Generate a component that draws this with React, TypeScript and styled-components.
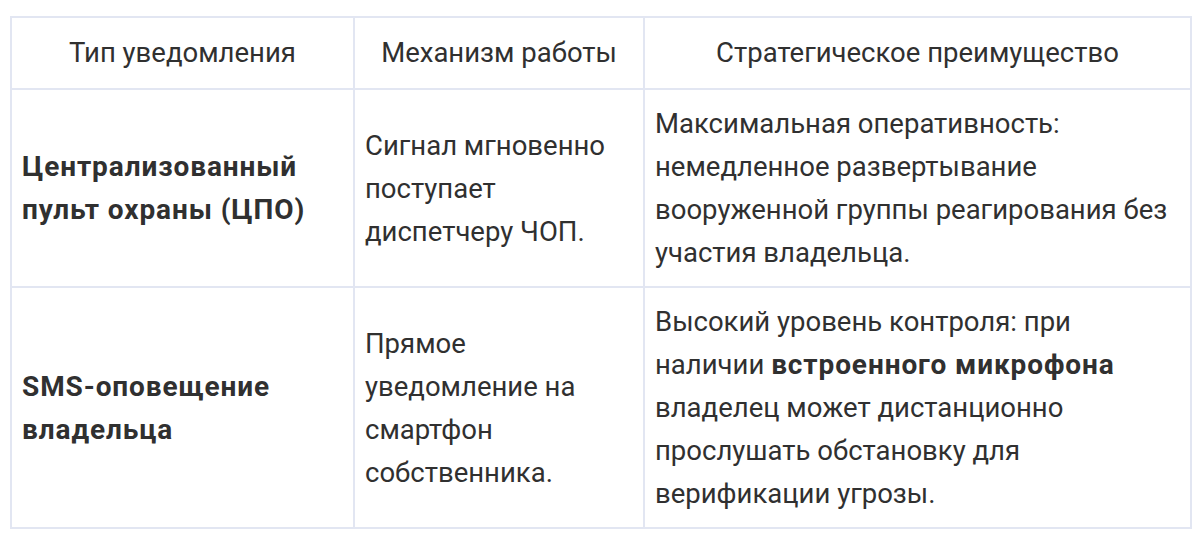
import React from "react";
import styled, { createGlobalStyle } from "styled-components";

const GlobalStyle = createGlobalStyle`
  html, body {
    margin: 0;
    padding: 0;
    background: #ffffff;
  }
  body {
    font-family: Roboto, "Noto Sans", "Liberation Sans", sans-serif;
    color: #303030;
  }
`;

const Page = styled.div`
  padding: 16px 10px;
`;

const Table = styled.table`
  width: 1180px;
  table-layout: fixed;
  border-collapse: collapse;
  font-size: 27.5px;
  line-height: 43px;
  border: 2px solid #e2e6f2;
`;

const HeadCell = styled.th`
  font-weight: 400;
  text-align: center;
  vertical-align: middle;
  padding: 13px 10px 14px;
  border: 2px solid #e2e6f2;
  color: #303030;
`;

const strongText = `
  font-weight: 700;
  font-size: 28px;
  letter-spacing: 0.9px;
`;

const Cell = styled.td<{ $strong?: boolean }>`
  text-align: left;
  vertical-align: middle;
  padding: 12px 10px;
  border: 2px solid #e2e6f2;
  color: #303030;
  font-weight: 400;
  ${({ $strong }) => ($strong ? strongText : "")}

  b {
    ${strongText}
  }
`;

interface Row {
  type: string;
  mechanism: string;
  advantage: React.ReactNode;
}

const rows: Row[] = [
  {
    type: "Централизованный пульт охраны (ЦПО)",
    mechanism: "Сигнал мгновенно поступает диспетчеру ЧОП.",
    advantage:
      "Максимальная оперативность: немедленное развертывание вооруженной группы реагирования без участия владельца.",
  },
  {
    type: "SMS-оповещение владельца",
    mechanism: "Прямое уведомление на смартфон собственника.",
    advantage: (
      <>
        Высокий уровень контроля: при
        <br />
        наличии <b>встроенного микрофона</b>
        <br />
        владелец может дистанционно
        <br />
        прослушать обстановку для
        <br />
        верификации угрозы.
      </>
    ),
  },
];

export default function App() {
  return (
    <>
      <GlobalStyle />
      <Page>
        <Table>
          <colgroup>
            <col style={{ width: 343 }} />
            <col style={{ width: 290 }} />
            <col style={{ width: 547 }} />
          </colgroup>
          <thead>
            <tr>
              <HeadCell>Тип уведомления</HeadCell>
              <HeadCell>Механизм работы</HeadCell>
              <HeadCell>Стратегическое преимущество</HeadCell>
            </tr>
          </thead>
          <tbody>
            {rows.map((r) => (
              <tr key={r.type}>
                <Cell $strong>{r.type}</Cell>
                <Cell>{r.mechanism}</Cell>
                <Cell>{r.advantage}</Cell>
              </tr>
            ))}
          </tbody>
        </Table>
      </Page>
    </>
  );
}
